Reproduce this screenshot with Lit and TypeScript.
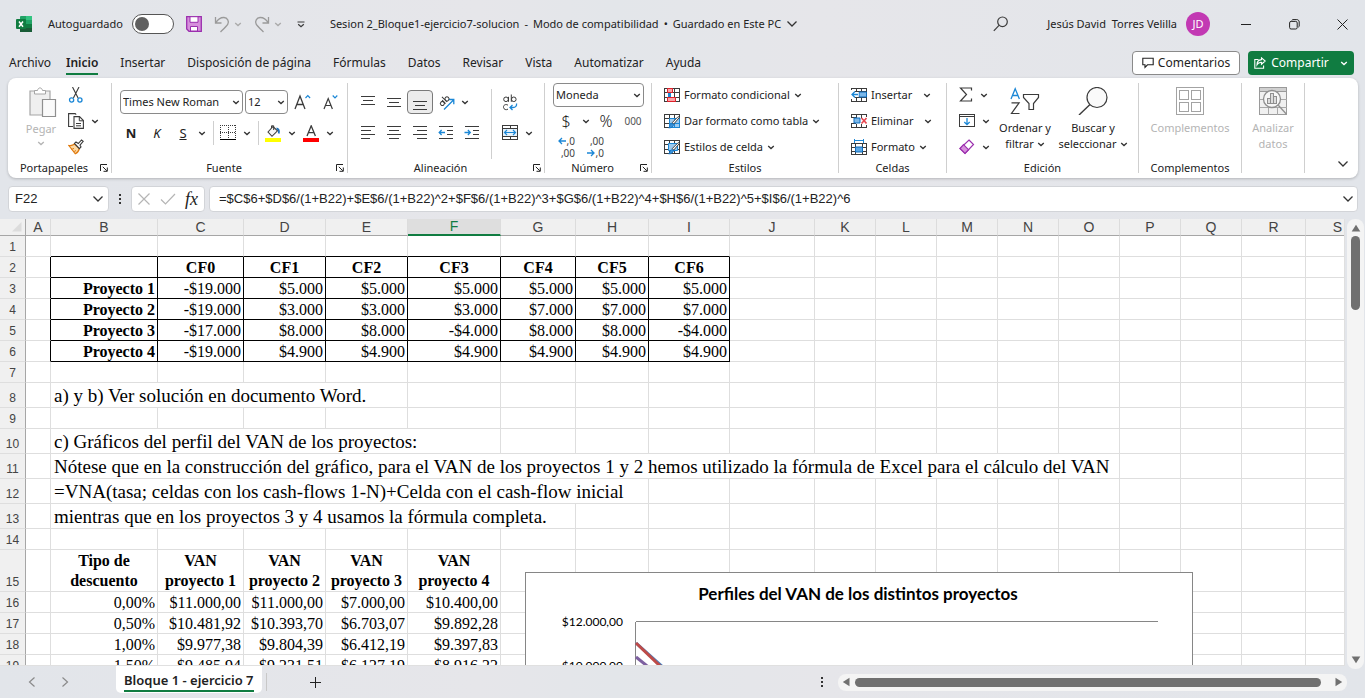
import { LitElement, html, svg, css, nothing, TemplateResult } from "lit";
import { customElement } from "lit/decorators.js";
import { classMap } from "lit/directives/class-map.js";
import { styleMap } from "lit/directives/style-map.js";

const icon = (w: number, h: number, body: unknown) =>
  html`<svg width=${w} height=${h} viewBox="0 0 ${w} ${h}" fill="none" stroke="#3b3b3b" aria-hidden="true">${body}</svg>`;

const chev = (color = "#333") =>
  icon(8, 5, svg`<path d="M1.2 1l2.8 2.6L6.8 1" stroke=${color} stroke-width="1.3"/>`);
const bigChev = () => icon(12, 8, svg`<path d="M1.5 1.5L6 6l4.5-4.5" stroke="#333" stroke-width="1.3"/>`);

const gridBase = svg`<path shape-rendering="crispEdges" d="M.5 1.5h15v13H.5zM.5 5.5h15M.5 10.5h15M5.5 1.5v13M10.5 1.5v13"/>`;
const brush = svg`<path d="M15.6 4.2L9.8 11l-1.6-1.4L14.2 3.600z" fill="#fff" stroke="#444" stroke-width="1"/><path d="M9.600 11.400c-.4 2.400-2.400 3.600-5 3.500 1.200-.8 1-2.200 1.800-3.400.6-.9 1.800-1 3.200-.1z" fill="#3f97dc" stroke="#0f6cbd" stroke-width=".8"/>`;

const lines = (spec: number[][]) =>
  icon(16, 16, svg`<path shape-rendering="crispEdges" d=${spec.map(([x, y, w]) => `M${x} ${y + 0.5}h${w}`).join("")} />`);

const I: Record<string, TemplateResult> = {
  excel: icon(16, 16, svg`<g stroke="none"><rect x="4" y="0" width="12" height="16" rx="1" fill="#21a366"/><rect x="10" y="0" width="6" height="4" fill="#33c481"/><rect x="4" y="4" width="6" height="4" fill="#107c41"/><rect x="10" y="4" width="6" height="4" fill="#21a366"/><rect x="4" y="8" width="12" height="4" fill="#185c37"/><rect x="10" y="8" width="6" height="4" fill="#107c41"/><rect x="4" y="12" width="12" height="4" fill="#185c37"/><rect x="0" y="3" width="10" height="10" rx="1" fill="#107c41"/></g><path d="M3 5.500l4 5.200M7 5.500l-4 5.200" stroke="#fff" stroke-width="1.500"/>`),
  save: icon(16, 16, svg`<path d="M.7.7h14.600v14.600H3L.7 13z" fill="#d68fdc" stroke="#9b2fae" stroke-width="1.300"/><path d="M4 .7h8v5.600H4z" fill="#fff" stroke="#9b2fae"/><path d="M4.500 15v-4.500h7V15z" fill="#fff" stroke="#9b2fae"/>`),
  undo: icon(16, 17, svg`<path d="M1.500 1v6h6M1.800 6.800C4 3 7 1.400 10 1.500c3.500.2 5.300 3.800 3.800 6.600C13 9.600 10 12.500 6.500 16" stroke="#9a9a9a" stroke-width="1.300"/>`),
  redo: icon(16, 17, svg`<path d="M14.500 1v6h-6M14.200 6.800C12 3 9 1.400 6 1.500 2.500 1.700.7 5.300 2.200 8.100 3 9.600 6 12.500 9.500 16" stroke="#9a9a9a" stroke-width="1.300"/>`),
  custom: icon(8, 7, svg`<path d="M.5 1h7M1.200 3.300L4 5.800l2.800-2.500" stroke-width="1.200"/>`),
  search: icon(16, 16, svg`<circle cx="9.500" cy="5.800" r="4.800" stroke-width="1.200"/><path d="M6 9.300L.8 14.800" stroke-width="1.200"/>`),
  min: icon(11, 11, svg`<path d="M0 5.500h10" shape-rendering="crispEdges" stroke="#222"/>`),
  restore: icon(11, 11, svg`<rect x=".6" y="2.400" width="7.600" height="7.600" rx="1.500" stroke="#222"/><path d="M2.800 1.400c.3-.6.7-.8 1.200-.8h3.800c1.400 0 2.400 1 2.400 2.400V7c0 .5-.3.900-.8 1.200" stroke="#222"/>`),
  close: icon(11, 11, svg`<path d="M.5.5l10 10M10.500.5l-10 10" stroke="#222"/>`),
  comment: icon(12, 12, svg`<path d="M.8 1.200h10.400v6.600H5.500L3 10.400V7.800H.8z" stroke="#222" stroke-width="1.100"/>`),
  share: icon(12, 12, svg`<path d="M4.500 2.500H.8v8.700h8.800V8.500M7.500.8l3.700 3.200-3.700 3.200V5.400C5.500 5.200 4 6 3 7.800 3 4.800 4.800 2.800 7.500 2.600z" stroke="#fff" stroke-width="1.100"/>`),
  paste: icon(32, 30, svg`<g transform="translate(4 0)"><path d="M1 4h20v24H1z" fill="#efefef" stroke="#a6a6a6" stroke-width="1.200"/><path d="M5.500 7V3.500h3c.3-1.600 1.300-2.600 2.500-2.600s2.200 1 2.500 2.600h3V7z" fill="#fff" stroke="#a6a6a6"/><path d="M13.500 12.500h13v17h-13z" fill="#fafafa" stroke="#8f8f8f" stroke-width="1.200"/></g>`),
  cut: icon(16, 16, svg`<path d="M4.500 0l5.600 11M11 0L5.400 11" stroke-width="1.100"/><circle cx="3.600" cy="13" r="2.100" stroke="#1b87d6" stroke-width="1.300"/><circle cx="11.900" cy="13" r="2.100" stroke="#1b87d6" stroke-width="1.300"/>`),
  copy: icon(16, 16, svg`<path d="M5 13.500H.6V.6h6.600l1 1" stroke-width="1.100"/><path d="M6 3.600h5.500l3.900 3.900v7.900H6z" fill="#fff" stroke-width="1.100"/><path d="M11.300 3.800v4h4M8 10.500h5M8 12.800h5"/>`),
  painter: icon(16, 16, svg`<path d="M.8 6.500l6.500 8.300c2-.9 3.500-3 4-5.300L6.500 5C5 6.300 3 6.900.8 6.500z" fill="#fbd9a5" stroke="#e07b10" stroke-width="1.200"/><path d="M3 10c1 .2 2 0 3-.6M5 12.500c1.300.1 2.200-.3 3-1" stroke="#e07b10"/><path d="M6.500 4.500L8 3l2.300 1.500L13.500.9l1.700 1.500-3.200 3.700L13 8l-1.600 1.700z" fill="#fff" stroke-width="1.100"/>`),
  launcher: icon(8, 8, svg`<path d="M.5 7V.5H7M2.800 2.800l4 4M7.300 3.500v3.800H3.500" stroke="#222"/>`),
  grow: icon(18, 16, svg`<path d="M1 15L6 2l5 13M2.800 10.500h6.400" stroke-width="1.300"/><path d="M11.500 4l2.300-2.300L16.100 4" stroke="#1b87d6" stroke-width="1.200"/>`),
  shrink: icon(16, 16, svg`<path d="M1 15L5.200 4.500 9.400 15M2.500 11.500h5.400" stroke-width="1.200"/><path d="M9.700 1.500l2.300 2.300 2.300-2.300" stroke="#1b87d6" stroke-width="1.200"/>`),
  borders: icon(16, 16, svg`<path shape-rendering="crispEdges" stroke-dasharray="1 1" d="M0 .5h16M.5 0v13M15.500 0v13M8.500 0v13M0 7.500h16"/><path shape-rendering="crispEdges" d="M0 14.500h16" stroke="#000"/>`),
  fill: icon(16, 17, svg`<path d="M3 7l5-5.500 4.500 4.300L7 11.300z" fill="#f5f5f5" stroke-width="1.100"/><path d="M6.500 3V.8h2.200V5" /><path d="M11.500 3.500c2 .3 3 1.800 2.200 5" stroke="#1b6fb8" stroke-width="1.800"/><path d="M0 13h16v4H0z" fill="#ff0" stroke="none"/>`),
  fontColor: icon(16, 17, svg`<path d="M4 11L8.200.8 12.400 11M5.500 7.700h5.400" stroke-width="1.300"/><path d="M0 13h16v4H0z" fill="#f00" stroke="none"/>`),
  top: lines([[1, 2, 14], [3, 6, 10], [1, 10, 14]]),
  middle: lines([[1, 4, 14], [3, 8, 10], [1, 12, 14]]),
  bottom: lines([[1, 7, 14], [3, 11, 10], [1, 15, 14]]),
  left: lines([[1, 1, 14], [1, 5, 10], [1, 9, 14], [1, 13, 9]]),
  center: lines([[1, 1, 14], [3, 5, 10], [1, 9, 14], [3, 13, 10]]),
  right: lines([[1, 1, 14], [5, 5, 10], [1, 9, 14], [5, 13, 10]]),
  outdent: icon(16, 16, svg`<path shape-rendering="crispEdges" d="M1 1.500h14M9 5.500h6M9 9.500h6M1 13.500h14"/><path d="M7 7.500H1.200M3.600 5L1.200 7.500 3.600 10" stroke="#1b87d6" stroke-width="1.300"/>`),
  indent: icon(16, 16, svg`<path shape-rendering="crispEdges" d="M1 1.500h14M9 5.500h6M9 9.500h6M1 13.500h14"/><path d="M.5 7.500h5.800M3.900 5l2.400 2.500L3.900 10" stroke="#1b87d6" stroke-width="1.300"/>`),
  orient: icon(17, 17, svg`<path d="M6 15.500L15.500 6M11 5.500h4.800v4.800" stroke="#1b87d6" stroke-width="1.300"/><g transform="rotate(-45 5.500 6.500)"><circle cx="2.600" cy="7.800" r="2"/><path d="M4.800 5.300v4.800M7 2.800v7.300"/><circle cx="9.100" cy="7.800" r="2"/></g>`),
  wrap: icon(16, 17, svg`<circle cx="4" cy="5.300" r="2.300"/><path d="M6.500 2.800v5M9.300.5v7.300"/><circle cx="11.800" cy="5.300" r="2.300"/><path d="M6 11.200c-2.500-1.600-4.800 0-4.500 2.200.3 2.200 2.700 2.900 4.500 1.700"/><path d="M14.500 9.500c.5 2.500-1 4-3.500 4H8.200M10.500 11l-2.500 2.500 2.500 2.500" stroke="#1b87d6" stroke-width="1.300"/>`),
  merge: icon(16, 16, svg`<path shape-rendering="crispEdges" d="M.5.5h15v14H.5zM.5 3.500h15M.5 11.500h15M8 .5v3M8 11.500v3"/><path d="M1 4h14v7H1z" fill="#e6f2fb" stroke="none"/><path d="M2.500 7.500h11M5 5L2.500 7.500 5 10M11 5l2.500 2.500L11 10" stroke="#1b87d6" stroke-width="1.200"/>`),
  cond: icon(16, 16, svg`${gridBase}<path d="M3.500 1.500h5v4h-5zM3.500 10.500h8v4h-8z" fill="#f8a5a8" stroke="#e0202a"/><path d="M4 6h3v4H4z" fill="#1b87d6" stroke="none"/>`),
  tableFmt: icon(16, 16, svg`${gridBase}<path d="M5.500 5.500h10v9h-10z" fill="#9dcbf0" stroke="#1b87d6"/><path d="M10.500 5v9M5 10.500h10" stroke="#1b87d6"/>${brush}`),
  cellStyle: icon(16, 16, svg`${gridBase}<path d="M4.500 4.500h9v7h-9z" fill="#9dcbf0" stroke="#1b87d6"/>${brush}`),
  insert: icon(16, 16, svg`<path shape-rendering="crispEdges" d="M.5 3V1.500h15v13H.5V12M5.500 1.500v13M10.500 1.500v13M4 4.500h11.500M4 10.500h11.500"/><path d="M8 5h7.500v5H8z" fill="#7db8e8" stroke="#0f6cbd"/><path d="M0 5h7.500v5H0z" fill="#fff" stroke="none"/><path d="M7 7.500H1M4 4.500l-3 3 3 3" stroke="#1b87d6" stroke-width="1.300"/>`),
  del: icon(16, 16, svg`<path shape-rendering="crispEdges" d="M.5 4V1.500h15V4M.5 11v3.500h15V12M5.500 1.500v3M10.500 1.500v3M5.500 11v3.500M10.500 11v3.500M0 4.500h5M0 10.500h5"/><path d="M3 5h6v5H3z" fill="#7db8e8" stroke="#0f6cbd"/><path d="M10.500 5l5 5.500M15.500 5l-5 5.500" stroke="#e8474f" stroke-width="1.600"/>`),
  format: icon(16, 17, svg`<path shape-rendering="crispEdges" d="M.5 4.500h15v11H.5zM.5 8.500h15M.5 12.500h15M4.500 4.500v11M11.500 4.500v11"/><path d="M4.500 8h7v5h-7z" fill="#5ba7e5" stroke="#0f6cbd"/><path d="M3.500 0v4M12.500 0v4M3.500 1.500h9" stroke="#1b87d6"/>`),
  sum: icon(14, 16, svg`<path d="M12.500 3.500V1H1.500l6 6.500-6 6.500h11v-2.500" stroke-width="1.200"/>`),
  fillDown: icon(16, 16, svg`<path shape-rendering="crispEdges" d="M.5 1.500h15v12H.5zM.5 3.500h15"/><path d="M8 5v6.500M5.300 9L8 11.700 10.700 9" stroke="#1b87d6" stroke-width="1.300"/>`),
  eraser: icon(16, 16, svg`<path d="M10 1l4.500 4.500L6 14.500l-5-5z" fill="#fff" stroke="#9b2fae" stroke-width="1.200"/><path d="M4.500 5.700l5 5L6 14.500l-5-5z" fill="#d68fdc" stroke="#9b2fae" stroke-width="1.200"/>`),
  sort: icon(30, 28, svg`<path d="M1 12L5.200 1.800 9.400 12M2.600 8.500h5.200" stroke="#1b87d6" stroke-width="1.300"/><path d="M1.500 15.800h7.600L1.500 26.500h8" stroke-width="1.200"/><path d="M13.500 7.500h15v3l-5 6v6h-4.500v-6l-5.500-6z" stroke-width="1.200"/>`),
  find: icon(30, 28, svg`<circle cx="19" cy="10.500" r="10" fill="#fafafa" stroke-width="1.200"/><path d="M12 17.500L1 28" stroke-width="1.400"/>`),
  addins: icon(28, 28, svg`<path shape-rendering="crispEdges" stroke="#a3a3a3" d="M.5.5h27v27H.5zM3.500 3.500h9v9h-9zM15.500 3.500h9v9h-9zM3.500 15.500h9v9h-9zM15.500 15.500h9v9h-9z"/>`),
  analyze: icon(28, 28, svg`<path shape-rendering="crispEdges" fill="#f0f0f0" stroke="#9a9a9a" d="M.5.5h27v27H.5z"/><path shape-rendering="crispEdges" fill="#d0d0d0" stroke="#9a9a9a" d="M.5.5h27v4H.5z"/><path shape-rendering="crispEdges" stroke="#a8a8a8" d="M.5 12.500h27M.5 20.500h27M9.500 20.500v7M18.500 20.500v7"/><circle cx="13" cy="12" r="8.500" fill="#f7f7f7" stroke="#8f8f8f" stroke-width="1.300"/><path d="M19.300 18.300l8 8.700" stroke="#8f8f8f" stroke-width="1.300"/><path shape-rendering="crispEdges" fill="#ddd" stroke="#8f8f8f" d="M8.500 11.500h3v5h-3zM11.500 6.500h3v10h-3zM14.500 9.500h3v7h-3z"/>`),
  prev: icon(8, 12, svg`<path d="M6.500 1.500L1.500 6l5 4.500" stroke="#8a8a8a" stroke-width="1.200"/>`),
  next: icon(8, 12, svg`<path d="M1.500 1.500l5 4.500-5 4.500" stroke="#8a8a8a" stroke-width="1.200"/>`),
  plus: icon(12, 12, svg`<path shape-rendering="crispEdges" d="M6.500 1v11M1 6.500h11" stroke="#222"/>`),
  dots: icon(3, 11, svg`<path d="M0 0h2v2H0zM0 4h2v2H0zM0 8h2v2H0z" fill="#333" stroke="none"/>`),
  cancel: icon(14, 14, svg`<path d="M1.500 1.500l11 11M12.500 1.500l-11 11" stroke="#b5b5b5" stroke-width="1.200"/>`),
  accept: icon(16, 12, svg`<path d="M1 6.500l4.500 4.500L15 1" stroke="#b5b5b5" stroke-width="1.200"/>`),
  corner: icon(10, 10, svg`<path d="M9.500 0v9.500H0z" fill="#dcdcdc" stroke="none"/>`),
  up: icon(10, 8, svg`<path d="M5 .8L9.300 7.500H.7z" fill="#707070" stroke="none"/>`),
  down: icon(10, 8, svg`<path d="M5 7.200L9.300.5H.7z" fill="#707070" stroke="none"/>`),
  back: icon(8, 10, svg`<path d="M.8 5L7.500.7v8.600z" fill="#707070" stroke="none"/>`),
  fwd: icon(8, 10, svg`<path d="M7.200 5L.5.7v8.600z" fill="#707070" stroke="none"/>`),
};

const base = css`
  :host { display: block; box-sizing: border-box; font: 11px/16px "Noto Sans", "Open Sans", sans-serif; color: #222; }
  *, *::before, *::after { box-sizing: border-box; }
  button, input, select { font: inherit; color: inherit; margin: 0; padding: 0; border: 0; background: none; }
  button { display: inline-flex; align-items: center; justify-content: center; white-space: nowrap; }
  input, select { outline: none; appearance: none; border-radius: 0; min-width: 0; }
  svg { display: block; flex: none; }
  .row { display: flex; align-items: center; }
  .grow { flex: 1; }
`;

@customElement("title-bar")
class TitleBar extends LitElement {
  static styles = [base, css`
    .bar { display: flex; align-items: center; height: 48px; padding: 0 17px 0 16px; white-space: nowrap; }
    .auto { display: flex; align-items: center; gap: 9px; margin: 0 12px 0 16px; }
    .switch { width: 42px; height: 20px; border: 1px solid #555; border-radius: 10px; background: #fff; display: flex; align-items: center; padding-left: 2px; }
    .switch::before { content: ""; width: 14px; height: 14px; border-radius: 50%; background: #606060; }
    .switch:checked { justify-content: flex-end; padding: 0 2px 0 0; }
    .history { display: flex; align-items: center; gap: 4px; margin-left: 12px; }
    .custom { margin: 0 25px 0 15px; }
    .doc { gap: 5px; white-space: pre; }
    .user { margin: 0 9px 0 38px; white-space: pre; }
    .avatar { width: 24px; height: 24px; border-radius: 50%; background: #c239b3; color: #fff; margin-right: 31px; }
    .win { gap: 37px; }
  `];
  render() {
    return html`<header class="bar">
      ${I.excel}
      <label class="auto"><span>Autoguardado</span><input class="switch" type="checkbox" role="switch"></label>
      <button aria-label="Guardar">${I.save}</button>
      <button class="history" aria-label="Deshacer">${I.undo}${chev("#aaa")}</button>
      <button class="history" aria-label="Rehacer">${I.redo}${chev("#aaa")}</button>
      <button class="custom" aria-label="Personalizar barra">${I.custom}</button>
      <button class="doc"><span>Sesion 2_Bloque1-ejercicio7-solucion</span><span>-</span><span>Modo de compatibilidad</span><span>•</span><span>Guardado en Este PC</span>${bigChev()}</button>
      <span class="grow"></span>
      <button aria-label="Buscar">${I.search}</button>
      <span class="user">Jesús David  Torres Velilla</span>
      <button class="avatar">JD</button>
      <div class="row win">
        <button aria-label="Minimizar">${I.min}</button>
        <button aria-label="Restaurar">${I.restore}</button>
        <button aria-label="Cerrar">${I.close}</button>
      </div>
    </header>`;
  }
}

@customElement("ribbon-tabs")
class RibbonTabs extends LitElement {
  static styles = [base, css`
    :host { font-size: 12px; }
    .bar { display: flex; align-items: center; height: 30px; padding: 0 11px 0 9px; }
    nav { display: flex; gap: 22px; }
    nav a { color: inherit; text-decoration: none; height: 24px; line-height: 24px; white-space: nowrap; border-bottom: 2px solid transparent; }
    nav a:first-child { margin-right: -7px; }
    nav a.active { font-weight: 600; border-bottom-color: #107c41; }
    .comments { height: 24px; width: 108px; gap: 4px; border: 1px solid #8a8a8a; border-radius: 4px; background: #fff; margin-right: 8px; }
    .share { height: 24px; width: 106px; gap: 5px; border-radius: 4px; background: #107c41; color: #fff; }
    .share svg:last-child { margin-left: 6px; }
  `];
  private tabs = ["Archivo", "Inicio", "Insertar", "Disposición de página", "Fórmulas", "Datos", "Revisar", "Vista", "Automatizar", "Ayuda"];
  render() {
    return html`<div class="bar">
      <nav>${this.tabs.map((t) => html`<a href="#" class=${classMap({ active: t === "Inicio" })}>${t}</a>`)}</nav>
      <span class="grow"></span>
      <button class="comments">${I.comment}Comentarios</button>
      <button class="share">${I.share}Compartir ${chev("#fff")}</button>
    </div>`;
  }
}

@customElement("ribbon-panel")
class RibbonPanel extends LitElement {
  static styles = [base, css`
    .panel { display: grid; grid-template-columns: 104px 236px 197px 107px 187px 108px 192px 103px 63px 1fr; height: 100px; margin: 0 7px 0 8px; padding: 5px 0; background: #fff; border-radius: 8px; box-shadow: 0 1px 3px rgba(0, 0, 0, 0.22); }
    .group { display: flex; flex-direction: column; border-right: 1px solid #cfcfcf; min-width: 0; }
    .body { flex: 1; display: flex; min-height: 0; }
    .foot { display: flex; height: 10px; align-items: center; }
    .foot span { flex: 1; text-align: center; line-height: 16px; }
    .foot button { margin-right: 3px; }
    .last { display: flex; align-items: flex-end; justify-content: flex-end; padding: 0 9px 5px 0; }
    .stack { display: flex; flex-direction: column; }
    .three { gap: 2px; align-items: flex-start; }
    .three > * { height: 24px; }
    .cell { width: 26px; height: 24px; }
    .drop { width: 12px; height: 24px; }
    .off { color: #b4b4b4; }
    .big { flex-direction: column; justify-content: flex-start; line-height: 16px; text-align: center; padding-top: 4px; }
    .big .cap { margin-top: 5px; }
    .big .line { display: flex; align-items: center; justify-content: center; gap: 3px; }
    .clip { display: flex; padding-left: 13px; gap: 7px; }
    .clip .big { width: 40px; gap: 4px; }
    .clip .cap { margin-top: 0; }
    .clip .row { gap: 7px; }
    .box { position: relative; display: flex; height: 24px; border: 1px solid #8a8a8a; border-radius: 4px; background: #fff; }
    .box select { width: 100%; padding-left: 2px; }
    .box svg { position: absolute; right: 2px; top: 9px; pointer-events: none; }
    .family { width: 123px; }
    .size { width: 43px; }
    .num { width: 91px; }
    .two { padding-top: 7px; gap: 7px; }
    .font { padding-left: 6px; }
    .font .first { gap: 2px; padding-left: 2px; }
    .sep { width: 1px; height: 24px; background: #cfcfcf; margin: 0 1px 0 5px; }
    .bold { font-weight: 700; font-size: 13px; }
    .italic { font-style: italic; font-size: 13px; }
    .under { text-decoration: underline; font-size: 13px; }
    .align { padding-left: 7px; }
    .on { border: 1px solid #7a7a7a; border-radius: 4px; background: #ececec; }
    .rule { width: 1px; background: #cfcfcf; margin: 6px 5px 4px 6px; }
    .number { padding-left: 8px; }
    .number .row { gap: 1px; }
    .glyph { font-size: 16px; font-weight: 300; }
    .zeros { font-size: 10px; color: #555; }
    .dec { display: flex; flex-direction: column; align-items: flex-end; font-size: 10px; line-height: 12px; width: 28px; height: 24px; padding-right: 6px; color: #444; }
    .cmd { gap: 4px; justify-content: flex-start; }
    .spread svg:last-child { margin-left: 7px; }
    .styles { padding-left: 12px; }
    .edit { padding-left: 12px; }
    .edit .row { gap: 7px; }
    .sortb { width: 64px; margin-left: 3px; }
    .findb { width: 72px; }
    .wide { width: 100%; }
  `];
  private group(name: string, body: unknown, launcher = false) {
    return html`<section class="group"><div class="body">${body}</div>
      <div class="foot"><span>${name}</span>${launcher ? html`<button aria-label="Más opciones de ${name}">${I.launcher}</button>` : nothing}</div></section>`;
  }
  private tool(name: string, content: unknown, cls = "") {
    return html`<button class="cell ${cls}" aria-label=${name} title=${name}>${content}</button>`;
  }
  private drop(name: string) {
    return html`<button class="drop" aria-label=${name}>${chev()}</button>`;
  }
  private pick(label: string, value: string, cls: string) {
    return html`<label class="box ${cls}"><select aria-label=${label}><option>${value}</option></select>${chev()}</label>`;
  }
  private cmd(ic: unknown, text: string, cls = "") {
    return html`<button class="cmd ${cls}">${ic}${text} ${chev()}</button>`;
  }
  render() {
    const arrow = (d: string) => icon(8, 8, svg`<path d=${d} stroke="#1b87d6" stroke-width="1.300"/>`);
    return html`<div class="panel">
      ${this.group("Portapapeles", html`<div class="clip">
        <button class="big off">${I.paste}<span class="cap">Pegar</span>${chev("#b4b4b4")}</button>
        <div class="stack three">
          <button class="row" aria-label="Cortar">${I.cut}</button>
          <button class="row" aria-label="Copiar">${I.copy}${chev()}</button>
          <button class="row" aria-label="Copiar formato">${I.painter}</button>
        </div></div>`, true)}
      ${this.group("Fuente", html`<div class="stack two font">
        <div class="row first">${this.pick("Fuente", "Times New Roman", "family")}${this.pick("Tamaño", "12", "size")}${this.tool("Aumentar tamaño", I.grow)}${this.tool("Disminuir tamaño", I.shrink)}</div>
        <div class="row">${this.tool("Negrita", "N", "bold")}${this.tool("Cursiva", "K", "italic")}${this.tool("Subrayado", "S", "under")}${this.drop("Subrayado")}
          <i class="sep"></i>${this.tool("Bordes", I.borders)}${this.drop("Bordes")}<i class="sep"></i>${this.tool("Relleno", I.fill)}${this.drop("Relleno")}${this.tool("Color de fuente", I.fontColor)}${this.drop("Color de fuente")}</div>
      </div>`, true)}
      ${this.group("Alineación", html`<div class="stack two align">
          <div class="row">${this.tool("Arriba", I.top)}${this.tool("Medio", I.middle)}${this.tool("Abajo", I.bottom, "on")}${this.tool("Orientación", I.orient)}${this.drop("Orientación")}</div>
          <div class="row">${this.tool("Izquierda", I.left)}${this.tool("Centro", I.center)}${this.tool("Derecha", I.right)}${this.tool("Reducir sangría", I.outdent)}${this.tool("Aumentar sangría", I.indent)}</div>
        </div><i class="rule"></i><div class="stack two">
          <div class="row">${this.tool("Ajustar texto", I.wrap)}</div>
          <div class="row">${this.tool("Combinar", I.merge)}${this.drop("Combinar")}</div>
        </div>`, true)}
      ${this.group("Número", html`<div class="stack three number">
        ${this.pick("Formato de número", "Moneda", "num")}
        <div class="row">${this.tool("Moneda", "$", "glyph")}${this.drop("Moneda")}${this.tool("Porcentaje", "%", "glyph")}${this.tool("Millares", "000", "zeros")}</div>
        <div class="row"><button class="dec" aria-label="Aumentar decimales"><span class="row">${arrow("M8 4H1M4 1L1 4l3 3")},0</span><span>,00</span></button>
          <button class="dec" aria-label="Disminuir decimales"><span>,00</span><span class="row">${arrow("M0 4h7M4 1l3 3-3 3")},0</span></button></div>
      </div>`, true)}
      ${this.group("Estilos", html`<div class="stack three styles">${this.cmd(I.cond, "Formato condicional")}${this.cmd(I.tableFmt, "Dar formato como tabla")}${this.cmd(I.cellStyle, "Estilos de celda")}</div>`)}
      ${this.group("Celdas", html`<div class="stack three styles">${this.cmd(I.insert, "Insertar", "spread")}${this.cmd(I.del, "Eliminar", "spread")}${this.cmd(I.format, "Formato")}</div>`)}
      ${this.group("Edición", html`<div class="stack three edit">
          <button class="row" aria-label="Autosuma">${I.sum}${chev()}</button><button class="row" aria-label="Rellenar">${I.fillDown}${chev()}</button><button class="row" aria-label="Borrar">${I.eraser}${chev()}</button></div>
        <button class="big sortb">${I.sort}<span class="cap">Ordenar y</span><span class="line">filtrar ${chev()}</span></button>
        <button class="big findb">${I.find}<span class="cap">Buscar y</span><span class="line">seleccionar ${chev()}</span></button>`)}
      ${this.group("Complementos", html`<button class="big off wide">${I.addins}<span class="cap">Complementos</span></button>`)}
      ${this.group("", html`<button class="big off wide">${I.analyze}<span class="cap">Analizar</span><span>datos</span></button>`)}
      <div class="last"><button aria-label="Contraer cinta">${bigChev()}</button></div>
    </div>`;
  }
}

@customElement("formula-bar")
class FormulaBar extends LitElement {
  static styles = [base, css`
    :host { font: 13px/16px "Liberation Sans", Arial, sans-serif; }
    .bar { display: flex; align-items: center; padding: 8px 7px 7px 8px; }
    .field { display: flex; align-items: center; height: 26px; background: #fff; border: 1px solid #d2d4d8; border-radius: 4px; }
    .name { width: 101px; padding: 0 4px 0 6px; }
    .name input, .formula input { flex: 1; }
    .dots { margin: 0 9px 0 10px; }
    .keys { width: 74px; gap: 9px; padding: 0 5px; margin-right: 4px; }
    .fx { font: italic 18px/20px "Liberation Serif", serif; }
    .formula { flex: 1; padding: 0 3px 0 9px; }
  `];
  render() {
    return html`<div class="bar">
      <div class="field name"><input aria-label="Cuadro de nombres" .value=${"F22"}><button aria-label="Nombres">${bigChev()}</button></div>
      <span class="dots">${I.dots}</span>
      <div class="field keys"><button aria-label="Cancelar">${I.cancel}</button><button aria-label="Introducir">${I.accept}</button><button class="fx">fx</button></div>
      <div class="field formula"><input aria-label="Barra de fórmulas" .value=${"=$C$6+$D$6/(1+B22)+$E$6/(1+B22)^2+$F$6/(1+B22)^3+$G$6/(1+B22)^4+$H$6/(1+B22)^5+$I$6/(1+B22)^6"}><button aria-label="Expandir">${bigChev()}</button></div>
    </div>`;
  }
}

type Cell = { t?: string; span?: number; cls?: string };
const COLS: [string, number][] = [["A", 25], ["B", 107], ["C", 86], ["D", 82], ["E", 82], ["F", 93], ["G", 75], ["H", 73], ["I", 81], ["J", 85], ["K", 61], ["L", 61], ["M", 61], ["N", 61], ["O", 61], ["P", 61], ["Q", 61], ["R", 64], ["S", 64]];
const money = (name: string, vals: string[]): Cell[] => [{ cls: "edge" }, { t: name, cls: "box name" }, ...vals.map((t) => ({ t, cls: "box r" }))];
const rates = (...vals: string[]): Cell[] => [{}, ...vals.map((t) => ({ t, cls: "r" }))];
const note = (t: string, span: number): Cell[] => [{}, { t, span, cls: "note" }];
const ROWS: { h?: string; cells: Cell[] }[] = [
  { cells: [{}, ...Array.from({ length: 8 }, () => ({ cls: "under" }))] },
  { cells: [{ cls: "edge" }, { cls: "box" }, ...[0, 1, 2, 3, 4, 5, 6].map((n) => ({ t: `CF${n}`, cls: "box head" }))] },
  { cells: money("Proyecto 1", ["-$19.000", "$5.000", "$5.000", "$5.000", "$5.000", "$5.000", "$5.000"]) },
  { cells: money("Proyecto 2", ["-$19.000", "$3.000", "$3.000", "$3.000", "$7.000", "$7.000", "$7.000"]) },
  { cells: money("Proyecto 3", ["-$17.000", "$8.000", "$8.000", "-$4.000", "$8.000", "$8.000", "-$4.000"]) },
  { cells: money("Proyecto 4", ["-$19.000", "$4.900", "$4.900", "$4.900", "$4.900", "$4.900", "$4.900"]) },
  { cells: [] },
  { h: "tall", cells: note("a) y b) Ver solución en documento Word.", 4) },
  { cells: [] },
  { h: "tall", cells: note("c) Gráficos del perfil del VAN de los proyectos:", 5) },
  { h: "tall", cells: note("Nótese que en la construcción del gráfico, para el VAN de los proyectos 1 y 2 hemos utilizado la fórmula de Excel para el cálculo del VAN", 14) },
  { h: "tall", cells: note("=VNA(tasa; celdas con los cash-flows 1-N)+Celda con el cash-flow inicial", 7) },
  { h: "tall", cells: note("mientras que en los proyectos 3 y 4 usamos la fórmula completa.", 6) },
  { cells: [] },
  { h: "double", cells: [{}, ...["Tipo de descuento", "VAN proyecto 1", "VAN proyecto 2", "VAN proyecto 3", "VAN proyecto 4"].map((t) => ({ t, cls: "head wraps" }))] },
  { cells: rates("0,00%", "$11.000,00", "$11.000,00", "$7.000,00", "$10.400,00") },
  { cells: rates("0,50%", "$10.481,92", "$10.393,70", "$6.703,07", "$9.892,28") },
  { cells: rates("1,00%", "$9.977,38", "$9.804,39", "$6.412,19", "$9.397,83") },
  { cells: rates("1,50%", "$9.485,94", "$9.231,51", "$6.127,19", "$8.916,22") },
];

@customElement("sheet-view")
class SheetView extends LitElement {
  static styles = [base, css`
    :host { display: flex; min-height: 0; flex: 1; }
    .sheet { position: relative; flex: 1; min-width: 0; overflow: hidden; background: #fff; border-right: 1px solid #e0e0e0; border-bottom: 1px solid #e0e0e0; }
    table { table-layout: fixed; width: 0; border-collapse: separate; border-spacing: 0; font: 16px/18px "Liberation Serif", "Times New Roman", serif; color: #000; }
    td, th { height: 21px; padding: 0 2px; border: 0 solid #dedede; border-width: 0 1px 1px 0; vertical-align: bottom; white-space: nowrap; overflow: hidden; font-weight: 400; text-align: left; }
    thead th { height: 17px; padding: 0; background: #f0f0f0; border-color: #dcdcdc; border-bottom-color: #a6a6a6; font: 14px/16px "Liberation Sans", Arial, sans-serif; text-align: center; color: #444; }
    thead th.sel { background: #dedede; color: #107c41; border-bottom: 2px solid #107c41; line-height: 15px; }
    thead th svg { margin: 0 3px 3px auto; }
    tbody th { padding: 0; background: #f0f0f0; border-right-color: #a6a6a6; font: 12px/17px "Liberation Sans", Arial, sans-serif; text-align: center; color: #444; }
    thead th:first-child { border-right-color: #a6a6a6; }
    .tall > * { height: 25px; }
    .double > * { height: 42px; }
    .note { font-size: 19px; line-height: 23px; padding-left: 3px; }
    .r { text-align: right; }
    .name { text-align: right; font-weight: 700; }
    .head { text-align: center; font-weight: 700; }
    .wraps { white-space: normal; line-height: 20px; }
    .box { border-color: #000; }
    .edge { border-right-color: #000; }
    .under { border-bottom-color: #000; }
    .chart { position: absolute; left: 525px; top: 353px; width: 668px; height: 360px; margin: 0; background: #fff; border: 1px solid #868686; }
    .title { font: 700 17px "Lato", sans-serif; fill: #000; stroke: none; }
    .axis { font: 12px "Lato", sans-serif; fill: #000; stroke: none; }
    .vbar { width: 17px; margin: 0 1px -3px 2px; border-radius: 8px; background: #f4f4f4; display: flex; flex-direction: column; align-items: center; padding: 5px 0; gap: 4px; }
    .thumb { width: 9px; height: 74px; border-radius: 5px; background: #707070; }
  `];
  private row(r: { h?: string; cells: Cell[] }, i: number) {
    const used = r.cells.reduce((n, c) => n + (c.span ?? 1), 0);
    const rest = Array.from({ length: COLS.length - used }, () => ({} as Cell));
    return html`<tr class=${r.h ?? ""}><th scope="row">${i + 1}</th>${[...r.cells, ...rest].map((c) => html`<td class=${c.cls ?? ""} colspan=${c.span ?? 1}>${c.t ?? ""}</td>`)}</tr>`;
  }
  render() {
    return html`<div class="sheet">
      <table>
        <colgroup><col style=${styleMap({ width: "26px" })}>${COLS.map(([, w]) => html`<col style=${styleMap({ width: `${w}px` })}>`)}</colgroup>
        <thead><tr><th>${I.corner}</th>${COLS.map(([n]) => html`<th scope="col" class=${classMap({ sel: n === "F" })}>${n}</th>`)}</tr></thead>
        <tbody>${ROWS.map((r, i) => this.row(r, i))}</tbody>
      </table>
      <figure class="chart" aria-label="Perfiles del VAN"><svg width="666" height="358" viewBox="0 0 666 358">
        <path d="M109.500 48.500h522M109.500 92.500h522M109.500 48.500v310" stroke="#868686" fill="none" shape-rendering="crispEdges"/>
        <path d="M110 70L158 113" stroke="#4a7ebb" stroke-width="3"/>
        <path d="M110 70L156 114" stroke="#be4b48" stroke-width="3"/>
        <path d="M110 84L146 113" stroke="#7d60a0" stroke-width="3"/>
        <text class="title" x="332" y="27" text-anchor="middle">Perfiles del VAN de los distintos proyectos</text>
        <text class="axis" x="97" y="53" text-anchor="end">$12.000,00</text>
        <text class="axis" x="97" y="97" text-anchor="end">$10.000,00</text>
      </svg></figure>
    </div>
    <div class="vbar">${I.up}<div class="thumb"></div><span class="grow"></span>${I.down}</div>`;
  }
}

@customElement("sheet-tabs")
class SheetTabs extends LitElement {
  static styles = [base, css`
    .bar { display: flex; align-items: center; height: 32px; padding: 0 18px 0 28px; }
    .nav { gap: 25px; width: 88px; }
    .tab { align-self: flex-start; height: 27px; padding: 0 8px; background: #fff; border-radius: 0 0 5px 5px; font-size: 13px; font-weight: 600; }
    .tab span { border-bottom: 2px solid #107c41; line-height: 24px; height: 24px; }
    .sep { width: 1px; height: 18px; background: #c8c8c8; margin: 0 42px 0 4px; }
    .hbar { width: 509px; max-width: 40vw; height: 17px; margin-left: 14px; border-radius: 8px; background: #f4f4f4; display: flex; align-items: center; gap: 5px; padding: 0 4px; }
    .thumb { flex: 1; height: 9px; border-radius: 5px; background: #707070; margin-right: 9px; }
  `];
  render() {
    return html`<footer class="bar">
      <div class="row nav"><button aria-label="Anterior">${I.prev}</button><button aria-label="Siguiente">${I.next}</button></div>
      <button class="tab"><span>Bloque 1 - ejercicio 7</span></button><i class="sep"></i>
      <button aria-label="Hoja nueva">${I.plus}</button>
      <span class="grow"></span>${I.dots}
      <div class="hbar">${I.back}<div class="thumb"></div>${I.fwd}</div>
    </footer>`;
  }
}

@customElement("app-root")
class AppRoot extends LitElement {
  static styles = css`
    :host { display: block; background: #fff; }
    .app { display: flex; flex-direction: column; height: calc(100vh - 1px); background: linear-gradient(90deg, #e2e5ea, #e6e6ea 35%, #e3e6ea 45%, #e6e6ea 60%, #e2e5ea); overflow: hidden; }
  `;
  render() {
    return html`<main class="app"><title-bar></title-bar><ribbon-tabs></ribbon-tabs><ribbon-panel></ribbon-panel><formula-bar></formula-bar><sheet-view></sheet-view><sheet-tabs></sheet-tabs></main>`;
  }
}
